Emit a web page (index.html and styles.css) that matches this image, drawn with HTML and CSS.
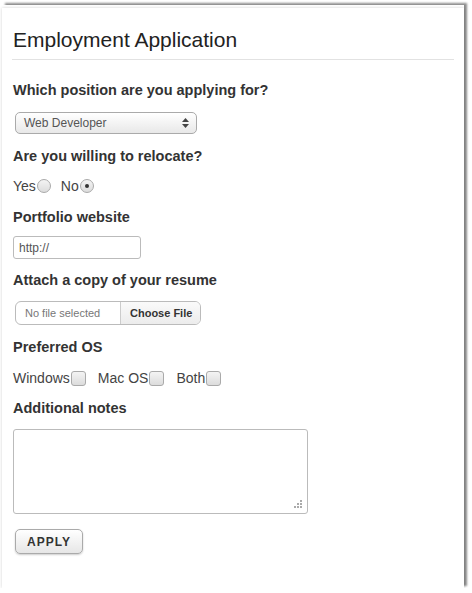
FILE: index.html
```html
<!DOCTYPE html>
<html lang="en">
<head>
  <meta charset="UTF-8" />
  <title>Employment Application</title>
  <link rel="stylesheet" href="styles.css">
</head>
<body>

<div class="frame">
  <form class="card">
    <h1>Employment Application</h1>

    <div class="field">
      <label class="question first">Which position are you applying for?</label>
      <div class="select">
        <span>Web Developer</span>
        <svg width="7" height="10" viewBox="0 0 7 10"><path d="M3.5 0 L7 4 H0 Z M3.5 10 L0 6 H7 Z" fill="#444"/></svg>
      </div>
    </div>

    <div class="field">
      <label class="question">Are you willing to relocate?</label>
      <div class="choices radios">
        <span class="choice">Yes<span class="radio"></span></span>
        <span class="choice">No<span class="radio checked"></span></span>
      </div>
    </div>

    <div class="field">
      <label class="question">Portfolio website</label>
      <div class="text-input">http://</div>
    </div>

    <div class="field">
      <label class="question tight">Attach a copy of your resume</label>
      <div class="file-input">
        <span class="file-name">No file selected</span>
        <span class="file-btn">Choose File</span>
      </div>
    </div>

    <div class="field">
      <label class="question">Preferred OS</label>
      <div class="choices checks">
        <span class="choice">Windows<span class="box"></span></span>
        <span class="choice">Mac OS<span class="box"></span></span>
        <span class="choice">Both<span class="box"></span></span>
      </div>
    </div>

    <div class="field">
      <label class="question">Additional notes</label>
      <div class="textarea">
        <svg class="grip" width="10" height="10" viewBox="0 0 10 10" fill="#aaa">
          <rect x="8" y="2" width="2" height="2"/>
          <rect x="5" y="5" width="2" height="2"/><rect x="8" y="5" width="2" height="2"/>
          <rect x="2" y="8" width="2" height="2"/><rect x="5" y="8" width="2" height="2"/><rect x="8" y="8" width="2" height="2"/>
        </svg>
      </div>
    </div>

    <button type="button" class="apply">APPLY</button>
  </form>
</div>

</body>
</html>
```

FILE: styles.css
```css
body {
  margin: 0;
  background: #fff;
  font-family: 'Liberation Sans', Arial, sans-serif;
  color: #333;
}

.frame {
  margin: 5px 5px 0 2px;
  padding-top: 3px;
  width: 462px;
  box-shadow: 3px -2px 2px rgba(0,0,0,0.45);
}

.card {
  display: flex;
  flex-direction: column;
  align-items: flex-start;
  background: #fff;
  padding: 0 10px 34px 10px;
  height: 546px;
  box-shadow: 0 0 3px rgba(0,0,0,0.18);
}

h1 {
  align-self: stretch;
  margin: 0;
  padding: 20px 0 7px 1px;
  font-size: 21px;
  line-height: 24px;
  font-weight: normal;
  color: #222;
  border-bottom: 1px solid #e2e2e2;
}

.field {
  display: flex;
  flex-direction: column;
  align-items: flex-start;
}

.question {
  font-size: 14.5px;
  line-height: 17px;
  font-weight: bold;
  color: #333;
  margin: 14px 0 12px 1px;
}

.question.first {
  margin-top: 22px;
}

.question.tight {
  margin-top: 13px;
}

.select {
  display: flex;
  align-items: center;
  justify-content: space-between;
  box-sizing: border-box;
  width: 182px;
  height: 22px;
  margin: 1px 0 0 3px;
  padding: 0 7px 0 8px;
  border: 1px solid #aaa;
  border-radius: 5px;
  background: linear-gradient(#fff, #e8e8e8);
  font-size: 12px;
  color: #555;
}

.choices {
  display: flex;
  gap: 10px;
  margin: 1px 0 0 1px;
  font-size: 14px;
  line-height: 16px;
  color: #444;
}

.choices.radios {
  margin-bottom: 1px;
}

.choices.checks {
  gap: 12px;
  margin-top: 2px;
}

.choice {
  display: flex;
  align-items: center;
}

.radio {
  width: 12px;
  height: 12px;
  border: 1px solid #aaa;
  border-radius: 50%;
  background: linear-gradient(#f4f4f4, #dcdcdc);
  margin-left: 1px;
  position: relative;
}

.radio.checked::after {
  content: '';
  position: absolute;
  left: 4px;
  top: 4px;
  width: 4px;
  height: 4px;
  border-radius: 50%;
  background: #333;
}

.box {
  width: 13px;
  height: 13px;
  border: 1px solid #aaa;
  border-radius: 3px;
  background: linear-gradient(#f4f4f4, #dcdcdc);
  margin-left: 1px;
}

.text-input {
  box-sizing: border-box;
  width: 128px;
  height: 23px;
  margin: -2px 0 0 1px;
  padding: 4px 5px;
  border: 1px solid #bbb;
  border-radius: 3px;
  font-size: 12px;
  color: #555;
}

.file-input {
  display: flex;
  box-sizing: border-box;
  width: 186px;
  height: 24px;
  margin: 0 0 0 3px;
  border: 1px solid #bbb;
  border-radius: 6px;
  font-size: 11px;
  overflow: hidden;
}

.file-name {
  display: flex;
  align-items: center;
  width: 105px;
  padding-left: 9px;
  box-sizing: border-box;
  color: #777;
  border-right: 1px solid #ccc;
}

.file-btn {
  display: flex;
  align-items: center;
  padding-left: 9px;
  flex: 1;
  font-weight: bold;
  color: #333;
  background: linear-gradient(#fafafa, #ececec);
}

.textarea {
  position: relative;
  box-sizing: border-box;
  width: 295px;
  height: 85px;
  margin-left: 1px;
  border: 1px solid #bbb;
  border-radius: 3px;
}

.grip {
  position: absolute;
  right: 5px;
  bottom: 5px;
}

.apply {
  margin: 15px 0 0 3px;
  width: 68px;
  height: 26px;
  border: 1px solid #aaa;
  border-radius: 5px;
  background: linear-gradient(#fff, #e6e6e6);
  box-shadow: 0 1px 2px rgba(0,0,0,0.2);
  font-family: 'Liberation Sans', Arial, sans-serif;
  font-size: 12px;
  font-weight: bold;
  letter-spacing: 1px;
  color: #333;
}
```
